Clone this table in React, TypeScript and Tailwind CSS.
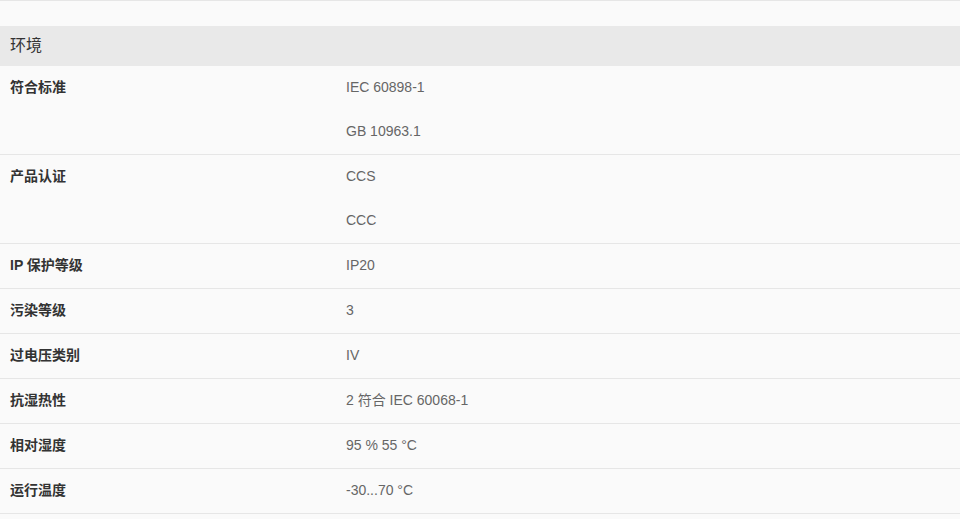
import React from "react";

const rows: { label: string; values: string[] }[] = [
  { label: "符合标准", values: ["IEC 60898-1", "GB 10963.1"] },
  { label: "产品认证", values: ["CCS", "CCC"] },
  { label: "IP 保护等级", values: ["IP20"] },
  { label: "污染等级", values: ["3"] },
  { label: "过电压类别", values: ["IV"] },
  { label: "抗湿热性", values: ["2 符合 IEC 60068-1"] },
  { label: "相对湿度", values: ["95 % 55 °C"] },
  { label: "运行温度", values: ["-30...70 °C"] },
];

export default function App() {
  return (
    <div
      className="w-[960px] h-[519px] overflow-hidden bg-[#fafafa] border-t border-[#e6e6e6]"
      style={{ fontFamily: '"Liberation Sans", Arial, "Noto Sans CJK SC", sans-serif' }}
    >
      <div className="h-[25px]" />
      <div className="h-[40px] bg-[#e9e9e9] flex items-center px-[10px] text-[16px] text-[#333]">
        环境
      </div>
      {rows.map((r) => (
        <div key={r.label} className="flex border-b border-[#e6e6e6]">
          <div className="w-[346px] pl-[10px] pb-[2px] h-[44px] flex items-center text-[14px] font-bold text-[#333]">
            {r.label}
          </div>
          <div className="flex flex-col">
            {r.values.map((v) => (
              <div key={v} className="h-[44px] pb-[2px] flex items-center text-[14px] text-[#666]">
                {v}
              </div>
            ))}
          </div>
        </div>
      ))}
    </div>
  );
}
